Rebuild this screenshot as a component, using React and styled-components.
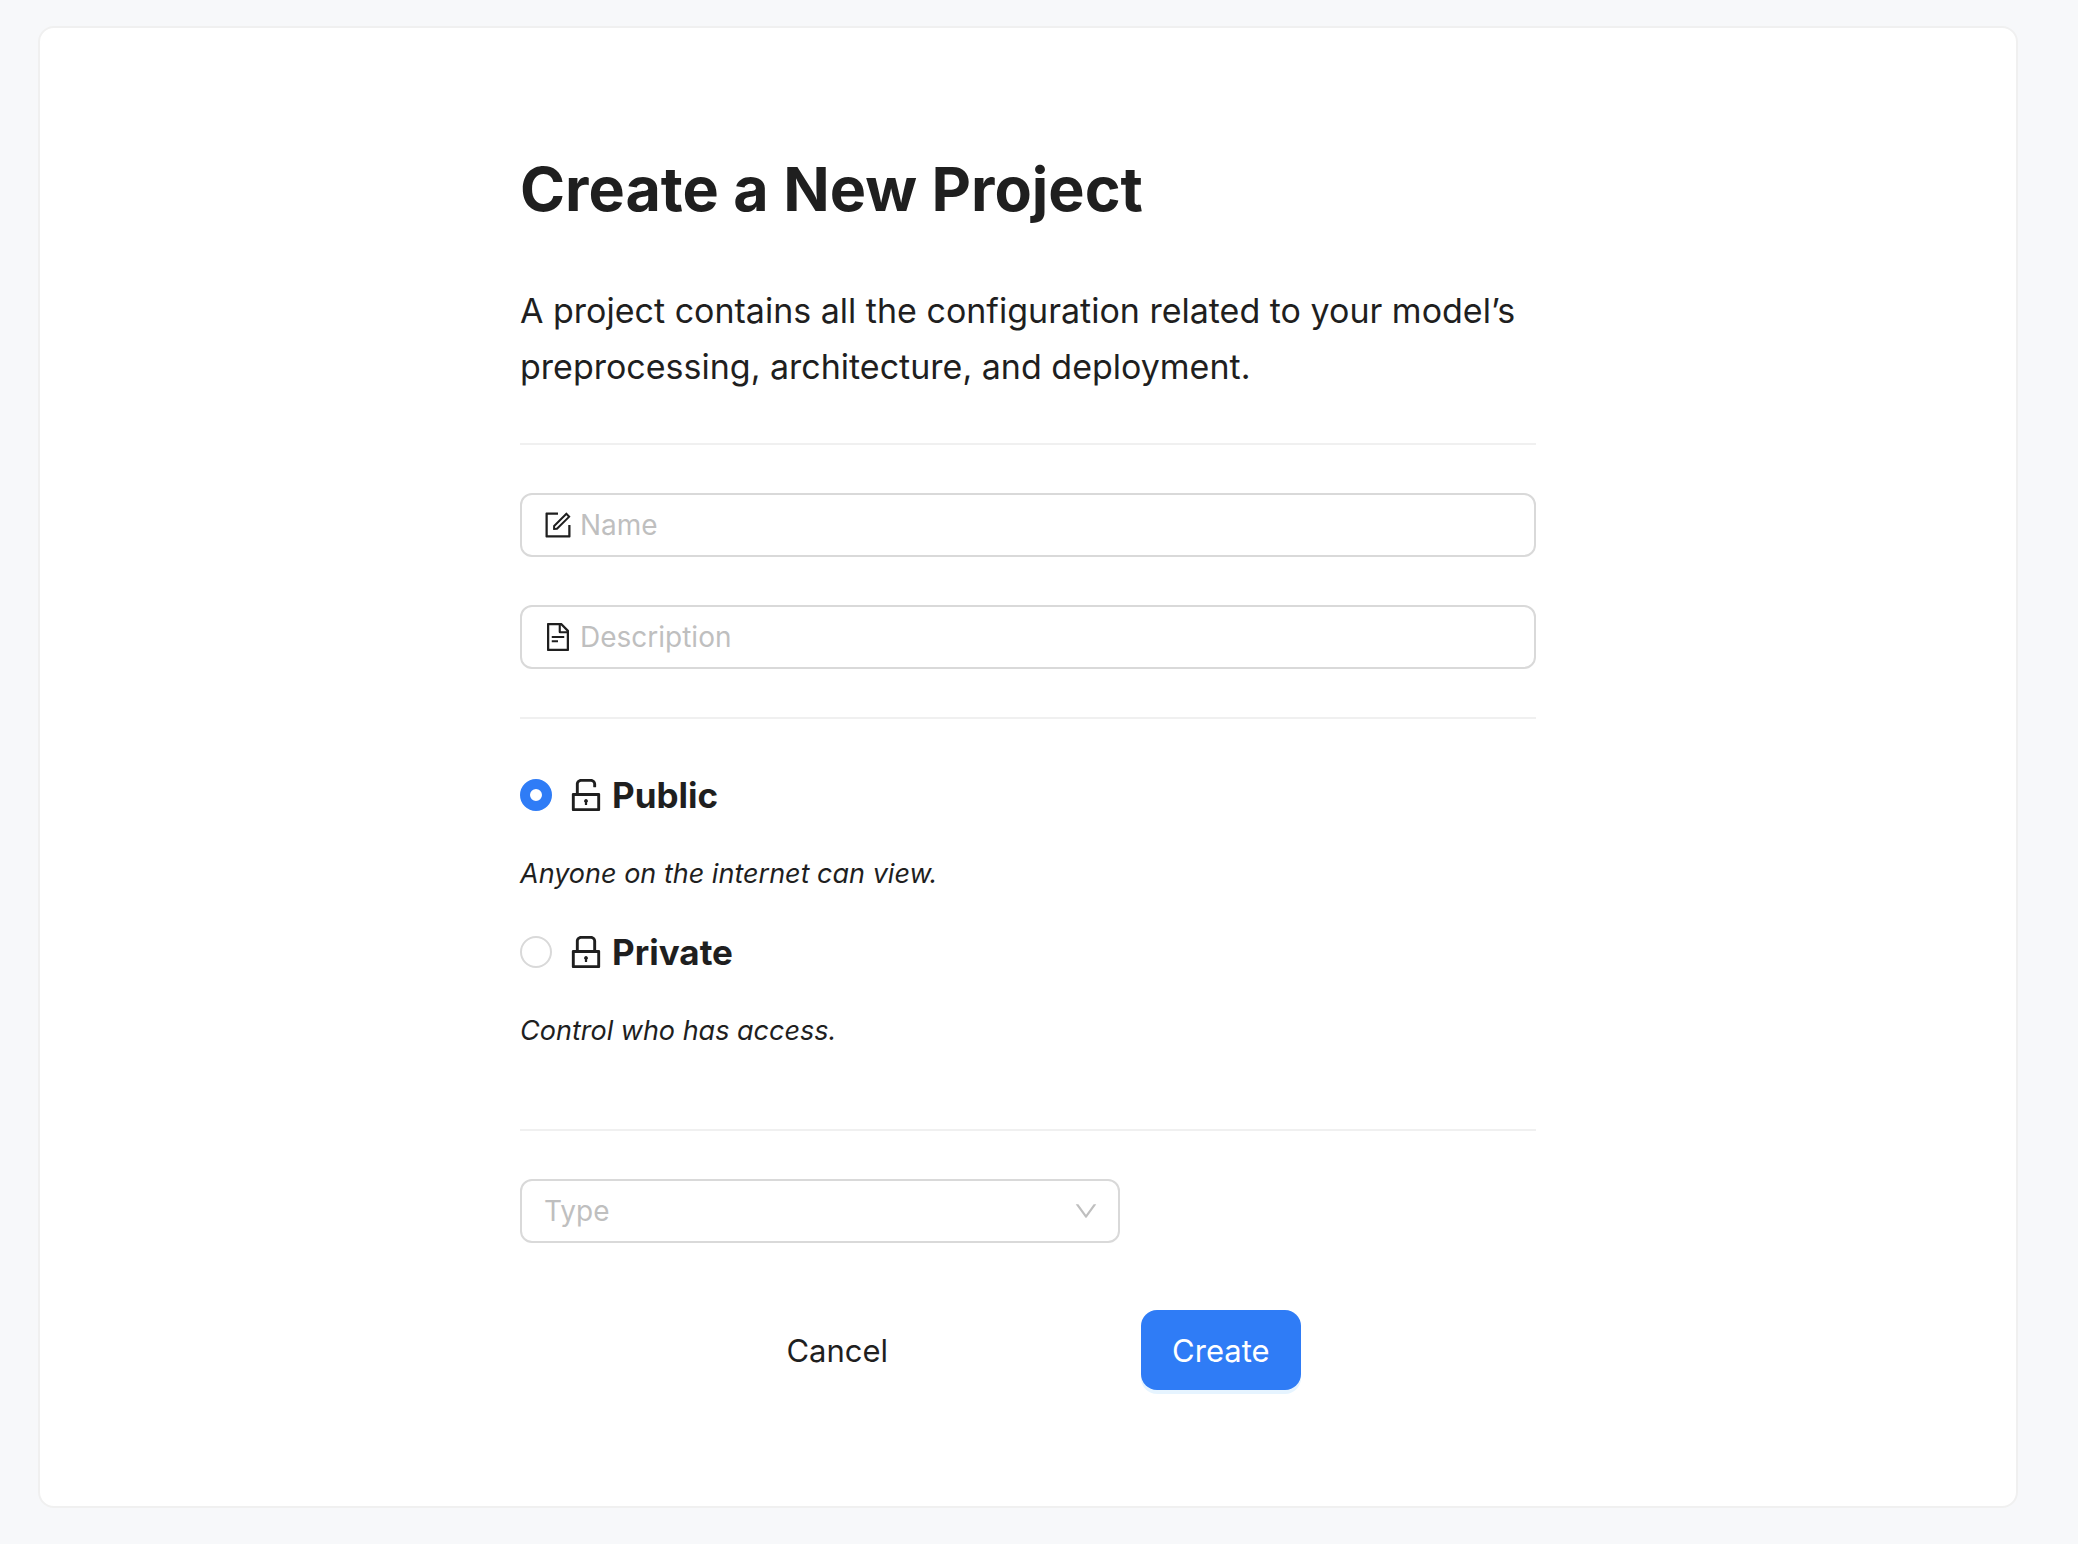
import React, { useState } from "react";
import styled, { createGlobalStyle } from "styled-components";
import {
  AiOutlineForm,
  AiOutlineFileText,
  AiOutlineUnlock,
  AiOutlineLock,
  AiOutlineDown,
} from "react-icons/ai";

const GlobalStyle = createGlobalStyle`
  *, *::before, *::after { box-sizing: border-box; }
  body {
    margin: 0;
    background: #f7f8fa;
    color: #1f1f1f;
    font-family: Inter, "Liberation Sans", sans-serif;
  }
  button, input, select { font: inherit; color: inherit; }
`;

const Page = styled.main`
  min-height: 100vh;
  display: flex;
  flex-direction: column;
  padding: 26px 60px 36px 38px;
`;

const Card = styled.section`
  flex: 1;
  background: #fff;
  border: 2px solid #f0f0f0;
  border-radius: 16px;
  padding: 121px 48px 112px;
`;

const Form = styled.form`
  max-width: 1016px;
  margin: 0 auto;
`;

const Title = styled.h1`
  margin: 0 0 54px;
  font-size: 61px;
  line-height: 80px;
  font-weight: 700;
`;

const Intro = styled.p`
  margin: 0;
  font-size: 34px;
  line-height: 56px;
`;

const Divider = styled.hr`
  margin: 48px 0;
  border: 0;
  border-top: 2px solid #f0f0f0;
`;

const Fields = styled.div`
  display: grid;
  gap: 48px;
`;

const Field = styled.label`
  display: flex;
  align-items: center;
  gap: 8px;
  height: 64px;
  padding: 0 22px;
  border: 2px solid #d9d9d9;
  border-radius: 12px;
`;

const FieldIcon = styled.svg.attrs({ viewBox: "64 64 896 896", "aria-hidden": true })`
  flex: none;
  width: 28px;
  height: 28px;
`;

const TextInput = styled.input`
  flex: 1;
  min-width: 0;
  padding: 0;
  border: 0;
  outline: 0;
  background: transparent;
  font-size: 28px;
  line-height: 44px;
  &::placeholder { color: #bfbfbf; opacity: 1; }
`;

const Choices = styled.fieldset`
  margin: 0;
  padding: 0;
  border: 0;
`;

const Choice = styled.label`
  display: flex;
  align-items: center;
  height: 56px;
`;

const Radio = styled.input`
  appearance: none;
  flex: none;
  width: 32px;
  height: 32px;
  margin: 0 16px 0 0;
  border: 2px solid #d9d9d9;
  border-radius: 50%;
  background: #fff;
  &:checked { border: 10px solid #2f7cf6; }
`;

const ChoiceIcon = styled(FieldIcon)`
  width: 36px;
  height: 36px;
  margin-right: 8px;
`;

const ChoiceName = styled.span`
  font-size: 35px;
  font-weight: 700;
`;

const Hint = styled.p`
  margin: 29px 0 28px;
  font-size: 27px;
  line-height: 44px;
  font-style: italic;
`;

const SelectBox = styled.div`
  display: grid;
  align-items: center;
  max-width: 600px;
  color: #bfbfbf;
  & > * { grid-area: 1 / 1; }
`;

const Select = styled.select`
  appearance: none;
  width: 100%;
  height: 64px;
  padding: 0 22px;
  border: 2px solid #d9d9d9;
  border-radius: 12px;
  background: #fff;
  font-size: 28px;
`;

const Arrow = styled(AiOutlineDown).attrs({ viewBox: "64 64 896 896", "aria-hidden": true })`
  width: 24px;
  height: 24px;
  margin-right: 22px;
  justify-self: end;
  pointer-events: none;
`;

const Actions = styled.div`
  display: flex;
  justify-content: center;
  gap: 222px;
  margin-top: 67px;
`;

const Button = styled.button`
  height: 80px;
  padding: 0 29px;
  border: 2px solid transparent;
  border-radius: 16px;
  background: ${(p) => (p.$primary ? "#2f7cf6" : "transparent")} border-box;
  color: ${(p) => (p.$primary ? "#fff" : "#1f1f1f")};
  box-shadow: ${(p) => (p.$primary ? "0 4px 0 rgba(5, 145, 255, 0.1)" : "none")};
  font-size: 31px;
  cursor: pointer;
`;

export default function App() {
  const [access, setAccess] = useState("public");
  const choose = (e) => setAccess(e.target.value);
  return (
    <>
      <GlobalStyle />
      <Page>
        <Card>
          <Form onSubmit={(e) => e.preventDefault()}>
            <Title>Create a New Project</Title>
            <Intro>
              A project contains all the configuration related to your model’s
              preprocessing, architecture, and deployment.
            </Intro>
            <Divider />
            <Fields>
              <Field>
                <FieldIcon as={AiOutlineForm} />
                <TextInput name="name" aria-label="Name" placeholder="Name" />
              </Field>
              <Field>
                <FieldIcon as={AiOutlineFileText} />
                <TextInput name="description" aria-label="Description" placeholder="Description" />
              </Field>
            </Fields>
            <Divider />
            <Choices aria-label="Access">
              <Choice>
                <Radio type="radio" name="access" value="public" checked={access === "public"} onChange={choose} />
                <ChoiceIcon as={AiOutlineUnlock} />
                <ChoiceName>Public</ChoiceName>
              </Choice>
              <Hint>Anyone on the internet can view.</Hint>
              <Choice>
                <Radio type="radio" name="access" value="private" checked={access === "private"} onChange={choose} />
                <ChoiceIcon as={AiOutlineLock} />
                <ChoiceName>Private</ChoiceName>
              </Choice>
              <Hint>Control who has access.</Hint>
            </Choices>
            <Divider />
            <SelectBox>
              <Select name="type" aria-label="Type" defaultValue="">
                <option value="" disabled>Type</option>
              </Select>
              <Arrow />
            </SelectBox>
            <Actions>
              <Button type="button">Cancel</Button>
              <Button type="submit" $primary>Create</Button>
            </Actions>
          </Form>
        </Card>
      </Page>
    </>
  );
}
